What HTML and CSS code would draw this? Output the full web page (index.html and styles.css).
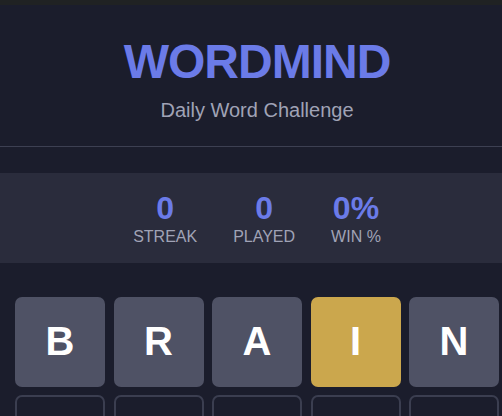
FILE: index.html
```html
<!DOCTYPE html>
<html lang="en">
<head>
<meta charset="utf-8">
<title>WordMind</title>
<link rel="stylesheet" href="styles.css">
</head>
<body>
<div class="topbar"></div>
<div class="app">
  <header class="header">
    <h1 class="title">WORDMIND</h1>
    <p class="subtitle">Daily Word Challenge</p>
  </header>
  <section class="stats">
    <div class="stat"><div class="stat-num">0</div><div class="stat-label">STREAK</div></div>
    <div class="stat"><div class="stat-num">0</div><div class="stat-label">PLAYED</div></div>
    <div class="stat"><div class="stat-num">0%</div><div class="stat-label">WIN %</div></div>
  </section>
  <main class="board">
    <div class="tile filled">B</div>
    <div class="tile filled">R</div>
    <div class="tile filled">A</div>
    <div class="tile present">I</div>
    <div class="tile filled">N</div>
    <div class="tile empty"></div>
    <div class="tile empty"></div>
    <div class="tile empty"></div>
    <div class="tile empty"></div>
    <div class="tile empty"></div>
  </main>
</div>
</body>
</html>
```
FILE: styles.css
```css
* { box-sizing: border-box; }
html, body {
  margin: 0;
  padding: 0;
  background: #1b1d2c;
  font-family: "Liberation Sans", Arial, sans-serif;
  overflow: hidden;
}
.topbar {
  height: 5px;
  background: #202223;
}
.app {
  width: 514px;
}
.header {
  text-align: center;
  padding: 30px 0 25px;
  border-bottom: 1px solid #3d4052;
}
.title {
  margin: 0 0 10px;
  font-size: 48px;
  line-height: 1.117;
  font-weight: 700;
  color: #6b7be8;
  letter-spacing: -1px;
}
.subtitle {
  margin: 0;
  font-size: 20px;
  line-height: 1.117;
  color: #a0a3b6;
}
.stats {
  margin-top: 26px;
  height: 90px;
  background: #2a2c3c;
  display: flex;
  justify-content: center;
  gap: 36px;
  padding-top: 18px;
}
.stat {
  display: flex;
  flex-direction: column;
  align-items: center;
}
.stat-num {
  font-size: 32px;
  line-height: 1.117;
  font-weight: 700;
  color: #6b7be8;
}
.stat-label {
  margin-top: 1px;
  font-size: 16px;
  line-height: 1.117;
  color: #a0a3b6;
}
.board {
  margin-top: 34px;
  padding: 0 15px;
  display: grid;
  grid-template-columns: repeat(5, 1fr);
  column-gap: 8.5px;
  row-gap: 8px;
}
.tile {
  height: 90px;
  border-radius: 7px;
  display: flex;
  align-items: center;
  justify-content: center;
  font-size: 40px;
  font-weight: 700;
  color: #ffffff;
}
.filled { background: #4f5265; }
.present { background: #cba74d; }
.empty {
  border: 2px solid #3b3e50;
  background: transparent;
}
```
